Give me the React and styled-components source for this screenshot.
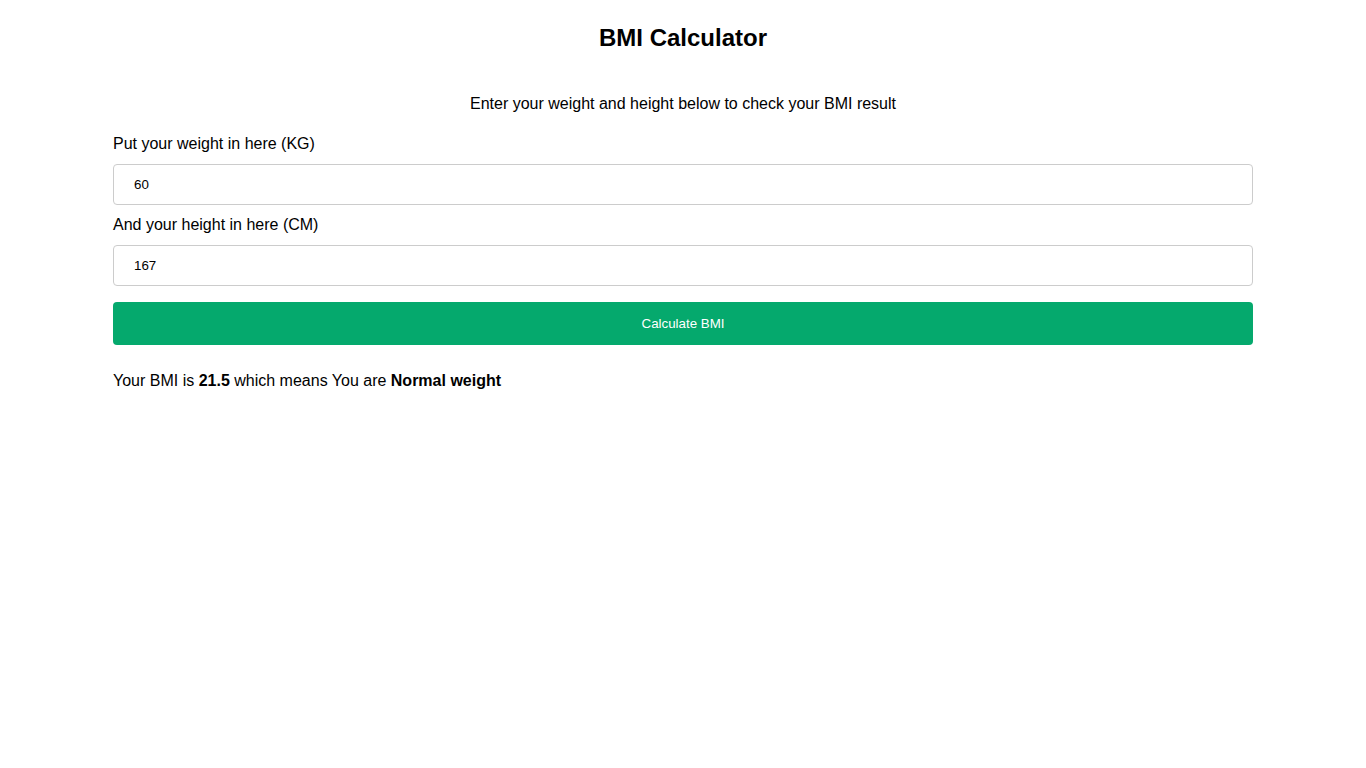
import styled, { createGlobalStyle } from 'styled-components';

const GlobalStyle = createGlobalStyle`
    body {
        margin: 0;
        background: #fff;
        color: #000;
        font-family: "Liberation Sans", Arial, sans-serif;
    }
`;

const Page = styled.div`
    max-width: 1140px;
    margin: 0 auto;
    padding-top: 24px;
`;

const Title = styled.h1`
    margin: 0;
    font-size: 24px;
    line-height: 28px;
    text-align: center;
    font-weight: bold;
`;

const Intro = styled.p`
    margin: 42px 0 20px;
    font-size: 16px;
    line-height: 20px;
    text-align: center;
`;

const Form = styled.form`
    display: flex;
    flex-direction: column;
`;

const Label = styled.label`
    font-size: 16px;
    line-height: 20px;
    margin-top: ${(p) => (p.$first ? '0' : '10px')};
    margin-bottom: 10px;
`;

const Input = styled.input`
    box-sizing: border-box;
    height: 41px;
    padding: 0 20px;
    border: 1px solid #ccc;
    border-radius: 4px;
    font-family: "Liberation Sans", Arial, sans-serif;
    font-size: 13.33px;
    color: #000;
    outline: none;
`;

const Button = styled.button`
    margin-top: 16px;
    height: 43px;
    border: none;
    border-radius: 4px;
    background: #05a96d;
    color: #fff;
    font-family: "Liberation Sans", Arial, sans-serif;
    font-size: 13.33px;
    cursor: pointer;
`;

const Result = styled.p`
    margin: 26px 0 0;
    font-size: 16px;
    line-height: 20px;
`;

function App() {
    return (
        <>
            <GlobalStyle />
            <Page>
                <Title>BMI Calculator</Title>
                <Intro>Enter your weight and height below to check your BMI result</Intro>
                <Form onSubmit={(e) => e.preventDefault()}>
                    <Label $first>Put your weight in here (KG)</Label>
                    <Input type="text" defaultValue="60" />
                    <Label>And your height in here (CM)</Label>
                    <Input type="text" defaultValue="167" />
                    <Button type="submit">Calculate BMI</Button>
                </Form>
                <Result>
                    Your BMI is <b>21.5</b> which means You are <b>Normal weight</b>
                </Result>
            </Page>
        </>
    );
}

export default App;
